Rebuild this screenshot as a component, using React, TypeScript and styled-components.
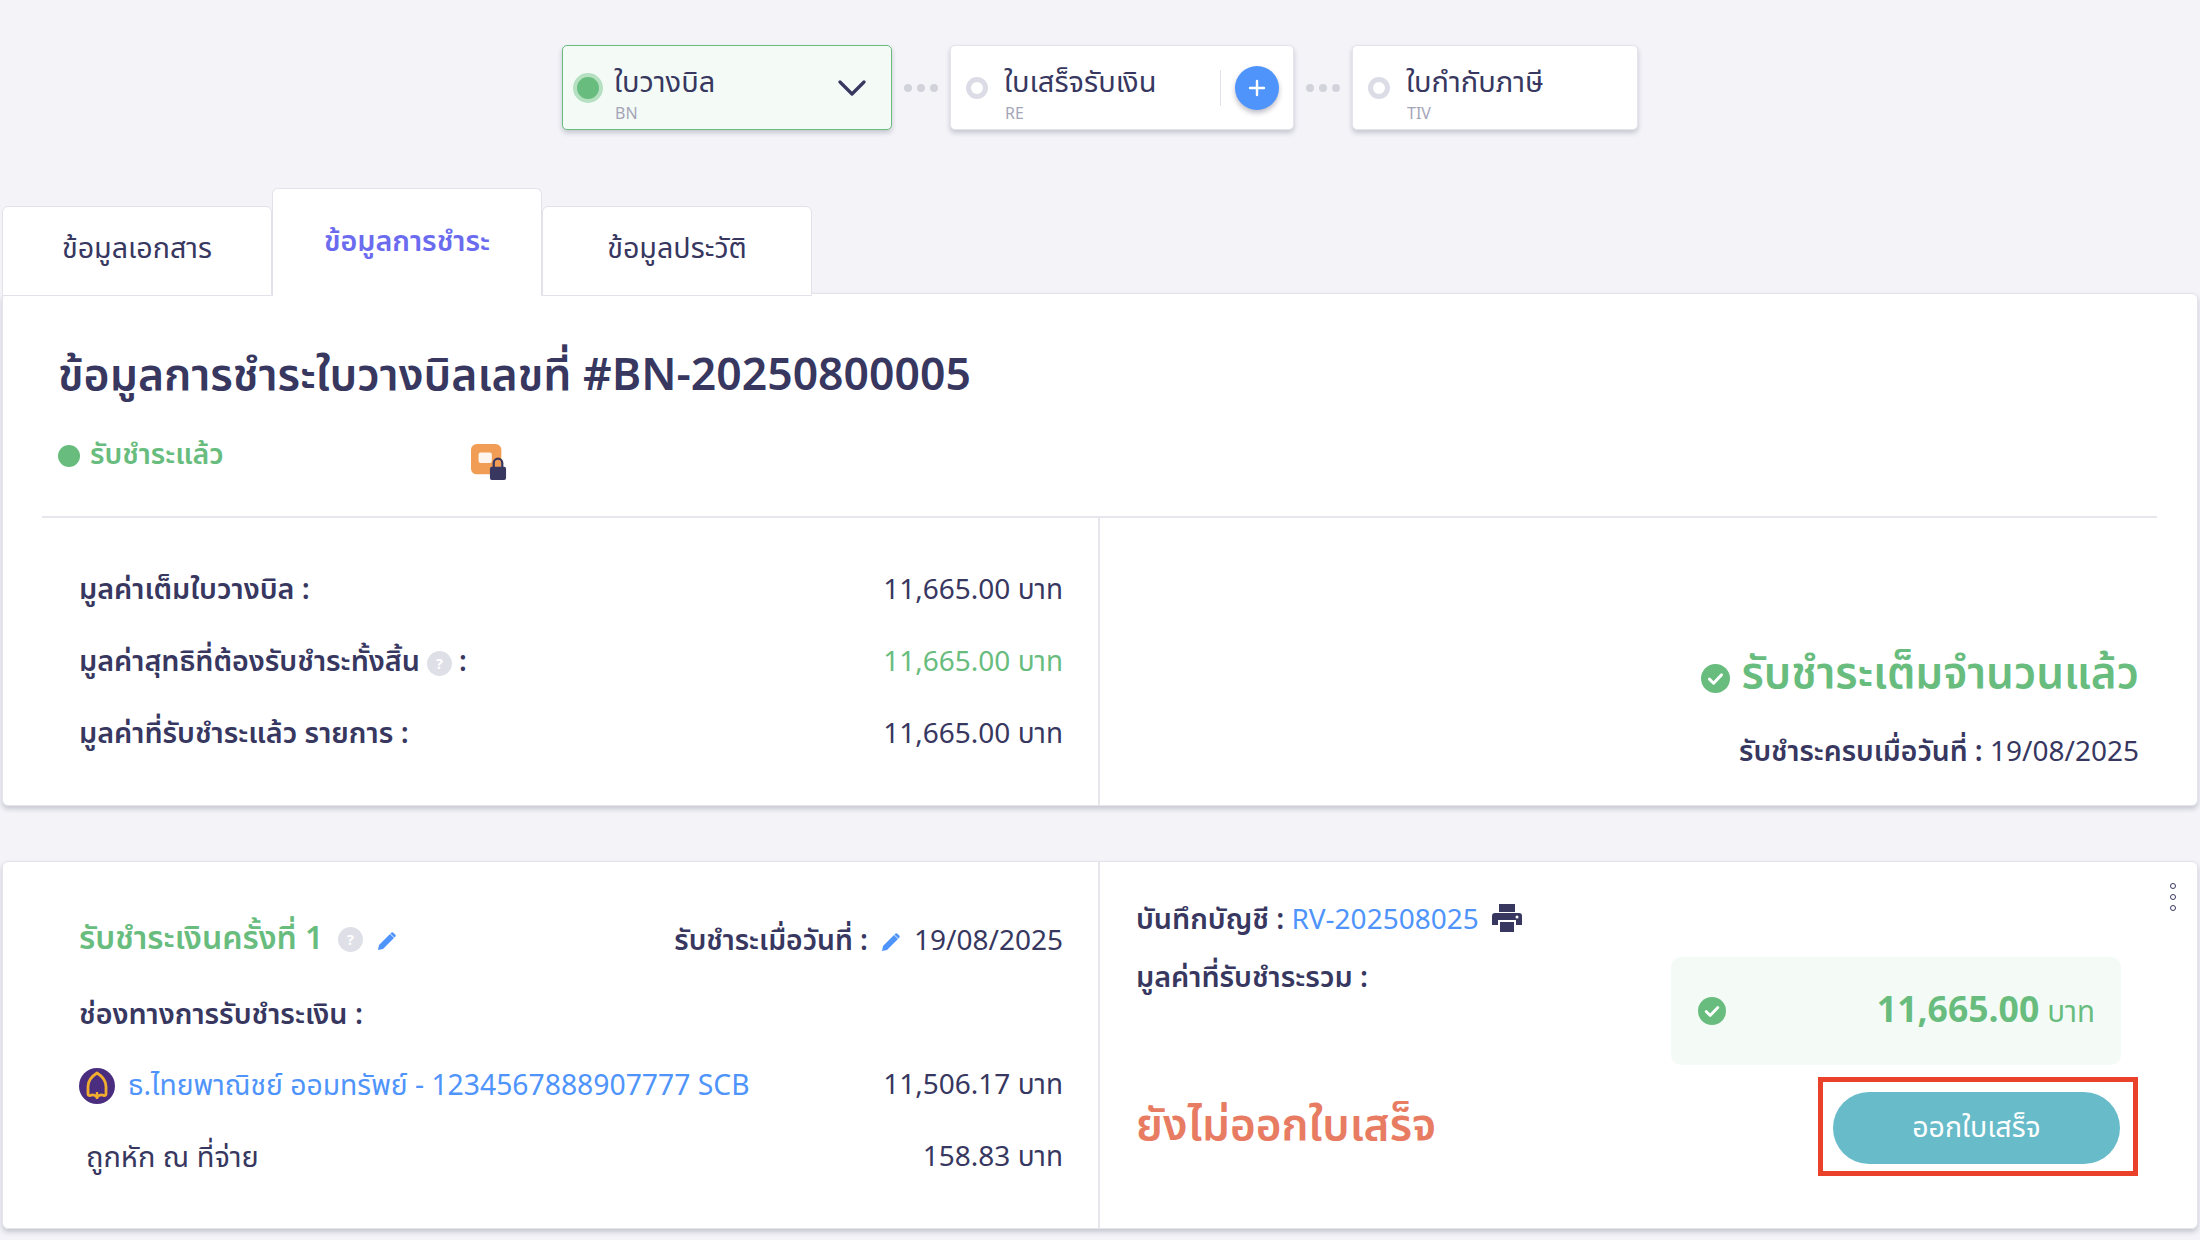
import React from "react";
import styled, { createGlobalStyle } from "styled-components";

const navy = "#37375f";
const green = "#68bd7e";
const blue = "#4f94fb";

const GlobalStyle = createGlobalStyle`
    html, body {
        margin: 0;
        padding: 0;
        background: #f3f3f8;
        color: ${navy};
        font-family: "Noto Sans Thai", "Noto Sans", "Open Sans", sans-serif;
    }
    * {
        box-sizing: border-box;
    }
`;

const Page = styled.div`
    width: 2200px;
    height: 1240px;
    overflow: hidden;
    padding: 45px 2px 0;
`;

const Stepper = styled.div`
    display: flex;
    justify-content: flex-start;
    align-items: center;
    padding-left: 560px;
    height: 85px;
`;

const StepCard = styled.div<{ $active?: boolean; $width: number }>`
    width: ${(p) => p.$width}px;
    height: 85px;
    display: flex;
    align-items: center;
    padding: 0 15px;
    border-radius: 5px;
    background: ${(p) => (p.$active ? "#f4fbf7" : "#fff")};
    border: 1px solid ${(p) => (p.$active ? green : "#e4e4ea")};
    box-shadow: 0 3px 5px rgba(40, 40, 70, 0.22);
`;

const StepDot = styled.span`
    flex: none;
    width: 30px;
    height: 30px;
    margin-left: -5px;
    margin-right: 11px;
    border-radius: 50%;
    background: ${green};
    border: 4px solid #b5e0c1;
`;

const StepRing = styled.span`
    flex: none;
    width: 22px;
    height: 22px;
    margin-right: 16px;
    border-radius: 50%;
    border: 5px solid #dcdce6;
`;

const StepText = styled.div`
    flex: 1;
    display: flex;
    flex-direction: column;
`;

const StepTitle = styled.span`
    font-size: 29px;
    line-height: 38px;
    margin-top: 13px;
`;

const StepCode = styled.span`
    font-size: 16px;
    line-height: 20px;
    color: #a5a5b8;
    margin: 2px 0 0 1px;
`;

const StepDivider = styled.span`
    width: 1px;
    height: 36px;
    background: #e2e2e8;
    margin-right: 14px;
`;

const AddButton = styled.span`
    flex: none;
    width: 44px;
    height: 44px;
    margin-right: -1px;
    border-radius: 50%;
    background: ${blue};
    box-shadow: 0 3px 5px rgba(40, 40, 70, 0.3);
    display: flex;
    align-items: center;
    justify-content: center;
`;

const Chevron = styled.svg`
    flex: none;
    margin-right: 10px;
`;

const Connector = styled.div`
    width: 58px;
    display: flex;
    justify-content: center;
    gap: 5px;
`;

const ConnectorDot = styled.span`
    width: 8px;
    height: 8px;
    border-radius: 50%;
    background: #d2d2da;
`;

const Tabs = styled.div`
    display: flex;
    align-items: flex-end;
    height: 108px;
    margin-top: 58px;
    position: relative;
    z-index: 1;
`;

const Tab = styled.div<{ $active?: boolean }>`
    width: 270px;
    height: ${(p) => (p.$active ? 108 : 90)}px;
    display: flex;
    justify-content: center;
    padding-top: ${(p) => (p.$active ? 34 : 23)}px;
    background: #fff;
    border: 1px solid #e2e2ea;
    border-bottom: ${(p) => (p.$active ? "none" : "1px solid #e2e2ea")};
    border-radius: 6px 6px 0 0;
    font-size: 28.7px;
    line-height: 40px;
    font-weight: ${(p) => (p.$active ? 600 : 400)};
    color: ${(p) => (p.$active ? "#6b6bf0" : navy)};
`;

const Card = styled.section`
    background: #fff;
    border-radius: 6px;
    border: 1px solid #e4e4ea;
    box-shadow: 0 3px 5px rgba(40, 40, 70, 0.22);
`;

const SummaryCard = styled(Card)`
    margin-top: -3px;
    height: 513px;
`;

const SummaryHead = styled.div`
    height: 224px;
    margin: 0 40px 0 39px;
    padding: 54px 16px 0;
    border-bottom: 2px solid #e6e6ec;
`;

const Title = styled.h1`
    margin: 0;
    font-size: 44.5px;
    line-height: 58px;
    font-weight: 600;
    color: ${navy};
`;

const StatusRow = styled.div`
    display: flex;
    align-items: center;
    margin-top: 26px;
`;

const StatusDot = styled.span`
    width: 22px;
    height: 22px;
    border-radius: 50%;
    background: ${green};
    margin-right: 10px;
`;

const StatusText = styled.span`
    width: 381px;
    font-size: 28.5px;
    line-height: 40px;
    font-weight: 600;
    color: ${green};
`;

const WalletSlot = styled.span`
    display: flex;
    margin-top: 12px;
`;

const Split = styled.div<{ $height: number }>`
    display: grid;
    grid-template-columns: 1095px 1fr;
    height: ${(p) => p.$height}px;
`;

const LeftPane = styled.div`
    padding: 0 35px 0 76px;
    display: flex;
    flex-direction: column;
`;

const SummaryRows = styled(LeftPane)`
    padding-top: 53px;
    gap: 32px;
`;

const Row = styled.div`
    display: flex;
    align-items: center;
    justify-content: space-between;
    height: 40px;
`;

const RightPane = styled.div`
    position: relative;
    border-left: 2px solid #e6e6ec;
`;

const PaidPane = styled(RightPane)`
    display: flex;
    flex-direction: column;
    align-items: flex-end;
    padding: 127px 58px 0 0;
`;

const Label = styled.span`
    font-size: 28.7px;
    line-height: 40px;
    font-weight: 600;
    display: inline-flex;
    align-items: center;
`;

const DateLabel = styled(Label)`
    font-size: 28.3px;
`;

const Plain = styled.span<{ $color?: string }>`
    font-size: 28px;
    line-height: 40px;
    color: ${(p) => p.$color || navy};
`;

const PaidTitle = styled.div`
    display: flex;
    align-items: center;
    gap: 11px;
    font-size: 44px;
    line-height: 60px;
    font-weight: 600;
    color: ${green};
`;

const PaidIcon = styled.span`
    display: flex;
    margin-top: 6px;
`;

const PaidDate = styled.div`
    margin-top: 28px;
    font-size: 28px;
    line-height: 40px;
`;

const ReceiptCard = styled(Card)`
    margin-top: 55px;
    height: 368px;
`;

const ReceiptLeft = styled(LeftPane)`
    padding-top: 57px;
`;

const RoundTitle = styled.span`
    font-size: 32px;
    line-height: 40px;
    font-weight: 600;
    color: ${green};
`;

const RoundGroup = styled.div`
    display: flex;
    align-items: center;
`;

const RoundDate = styled(RoundGroup)`
    font-size: 28px;
    padding-top: 5px;
`;

const PencilSlot = styled.span`
    display: flex;
    margin-top: 4px;
`;

const ChannelLabel = styled(Label)`
    margin-top: 37px;
`;

const BankRow = styled(Row)`
    margin-top: 30px;
`;

const BankName = styled.span`
    display: flex;
    align-items: center;
    gap: 13px;
    font-size: 28.3px;
    color: ${blue};
`;

const WithheldRow = styled(Row)`
    margin-top: 32px;
    padding-left: 7px;
`;

const WithheldName = styled(Plain)`
    font-size: 29px;
`;

const ReceiptRight = styled(RightPane)`
    padding: 39px 59px 0 36px;
`;

const Kebab = styled.div`
    position: absolute;
    top: 21px;
    right: 21px;
    display: flex;
    flex-direction: column;
    gap: 5px;
`;

const KebabDot = styled.span`
    width: 6px;
    height: 6px;
    border-radius: 50%;
    border: 1.5px solid ${navy};
`;

const LedgerRow = styled.div`
    display: flex;
    align-items: center;
    height: 40px;
    gap: 7px;
`;

const PrinterSlot = styled.span`
    display: flex;
    margin: -6px 0 0 6px;
`;

const TotalRow = styled.div`
    display: flex;
    justify-content: space-between;
    align-items: flex-start;
    margin-top: 16px;
    padding-right: 17px;
`;

const TotalLabel = styled(Label)`
    margin-top: 2px;
`;

const TotalBox = styled.div`
    width: 450px;
    height: 108px;
    border-radius: 10px;
    background: #f4fbf7;
    display: flex;
    align-items: center;
    justify-content: space-between;
    padding: 0 26px 0 27px;
`;

const TotalAmount = styled.span`
    font-size: 35.5px;
    font-weight: 700;
    color: ${green};
`;

const TotalUnit = styled.span`
    font-size: 29.5px;
    color: ${green};
    margin-left: 8px;
`;

const ActionRow = styled.div`
    display: flex;
    justify-content: space-between;
    align-items: center;
    margin-top: 12px;
`;

const NotIssued = styled.span`
    font-size: 44px;
    line-height: 60px;
    font-weight: 600;
    color: #e87c63;
`;

const ActionFrame = styled.div`
    width: 320px;
    height: 99px;
    border: 5px solid #e9412a;
    padding: 10px 13px 7px 10px;
`;

const IssueButton = styled.button`
    width: 100%;
    height: 100%;
    border: 0;
    border-radius: 36px;
    background: #68bbc9;
    color: #fff;
    font: inherit;
    font-size: 28.5px;
    cursor: pointer;
`;

const Icon = styled.svg<{ $gap?: number }>`
    flex: none;
    margin: 0 ${(p) => p.$gap ?? 0}px;
`;

const CheckCircle = ({ size }: { size: number }) => (
    <Icon width={size} height={size} viewBox="0 0 24 24">
        <circle cx="12" cy="12" r="12" fill={green} />
        <path d="M7 12.5l3.4 3.4L17 9" fill="none" stroke="#fff" strokeWidth="2.4" strokeLinecap="round" strokeLinejoin="round" />
    </Icon>
);

const Help = ({ size, gap }: { size: number; gap: number }) => (
    <Icon $gap={gap} width={size} height={size} viewBox="0 0 24 24">
        <circle cx="12" cy="12" r="12" fill="#dfdfe8" />
        <text x="12" y="17" textAnchor="middle" fontSize="14" fontWeight="700" fill="#fff">?</text>
    </Icon>
);

const Pencil = ({ gap }: { gap: number }) => (
    <Icon $gap={gap} width={18} height={18} viewBox="0 0 18 18">
        <path d="M0 18l1-5L12 2l4 4L5 17z" fill={blue} />
        <path d="M13.2 0.8a1.6 1.6 0 0 1 2.2 0l1.8 1.8a1.6 1.6 0 0 1 0 2.2l-.8.8-4-4z" fill={blue} />
    </Icon>
);

const Printer = () => (
    <Icon width={30} height={28} viewBox="0 0 30 28">
        <path d="M7 0h16v8H7z" fill={navy} />
        <path d="M3 9h24a3 3 0 0 1 3 3v9h-6v-5H6v5H0v-9a3 3 0 0 1 3-3z" fill={navy} />
        <path d="M8 18h14v10H8z" fill={navy} />
        <circle cx="25" cy="13" r="1.5" fill="#fff" />
    </Icon>
);

const WalletLock = () => (
    <Icon width={36} height={36} viewBox="0 0 38 38">
        <rect x="0" y="0" width="32" height="32" rx="6" fill="#f29d55" />
        <rect x="8" y="9" width="14" height="11" rx="2" fill="#fff" opacity="0.9" />
        <path d="M24 25v-5a4.500 4.500 0 0 1 9 0v5" fill="none" stroke={navy} strokeWidth="2.4" />
        <rect x="20" y="24" width="17" height="14" rx="2" fill={navy} />
    </Icon>
);

const ScbLogo = () => (
    <Icon width={36} height={36} viewBox="0 0 36 36">
        <circle cx="18" cy="18" r="18" fill="#4a2d7f" />
        <path d="M18 5c4 2.500 9 7.500 9 13.500V26c0 1.200-1 1.800-2.200 1.400-2.600-1-5-.6-6.800 1.600-1.800-2.200-4.200-2.600-6.800-1.600C10 27.800 9 27.200 9 26v-7.500C9 12.500 14 7.500 18 5z" fill="none" stroke="#f0ad2e" strokeWidth="2.800" strokeLinejoin="round" />
        <path d="M18 24v7" stroke="#f0ad2e" strokeWidth="2.400" />
    </Icon>
);

const Dots = () => (
    <Connector>
        <ConnectorDot />
        <ConnectorDot />
        <ConnectorDot />
    </Connector>
);

export default function App() {
    return (
        <Page>
            <GlobalStyle />
            <Stepper>
                <StepCard $active $width={330}>
                    <StepDot />
                    <StepText>
                        <StepTitle>ใบวางบิล</StepTitle>
                        <StepCode>BN</StepCode>
                    </StepText>
                    <Chevron width={28} height={16} viewBox="0 0 28 16">
                        <path d="M2 2l12 12L26 2" fill="none" stroke={navy} strokeWidth="3.200" strokeLinecap="round" strokeLinejoin="round" />
                    </Chevron>
                </StepCard>
                <Dots />
                <StepCard $width={344}>
                    <StepRing />
                    <StepText>
                        <StepTitle>ใบเสร็จรับเงิน</StepTitle>
                        <StepCode>RE</StepCode>
                    </StepText>
                    <StepDivider />
                    <AddButton>
                        <svg width="18" height="18" viewBox="0 0 18 18">
                            <path d="M9 2v14M2 9h14" stroke="#fff" strokeWidth="2.400" strokeLinecap="round" />
                        </svg>
                    </AddButton>
                </StepCard>
                <Dots />
                <StepCard $width={286}>
                    <StepRing />
                    <StepText>
                        <StepTitle>ใบกำกับภาษี</StepTitle>
                        <StepCode>TIV</StepCode>
                    </StepText>
                </StepCard>
            </Stepper>

            <Tabs>
                <Tab>ข้อมูลเอกสาร</Tab>
                <Tab $active>ข้อมูลการชำระ</Tab>
                <Tab>ข้อมูลประวัติ</Tab>
            </Tabs>

            <SummaryCard>
                <SummaryHead>
                    <Title>ข้อมูลการชำระใบวางบิลเลขที่ #BN-20250800005</Title>
                    <StatusRow>
                        <StatusDot />
                        <StatusText>รับชำระแล้ว</StatusText>
                        <WalletSlot>
                            <WalletLock />
                        </WalletSlot>
                    </StatusRow>
                </SummaryHead>
                <Split $height={287}>
                    <SummaryRows>
                        <Row>
                            <Label>มูลค่าเต็มใบวางบิล :</Label>
                            <Plain>11,665.00 บาท</Plain>
                        </Row>
                        <Row>
                            <Label>
                                มูลค่าสุทธิที่ต้องรับชำระทั้งสิ้น
                                <Help size={25} gap={7} />
                                <Plain>:</Plain>
                            </Label>
                            <Plain $color={green}>11,665.00 บาท</Plain>
                        </Row>
                        <Row>
                            <Label>มูลค่าที่รับชำระแล้ว รายการ :</Label>
                            <Plain>11,665.00 บาท</Plain>
                        </Row>
                    </SummaryRows>
                    <PaidPane>
                        <PaidTitle>
                            <PaidIcon>
                                <CheckCircle size={29} />
                            </PaidIcon>
                            รับชำระเต็มจำนวนแล้ว
                        </PaidTitle>
                        <PaidDate>
                            <DateLabel>รับชำระครบเมื่อวันที่ :</DateLabel> 19/08/2025
                        </PaidDate>
                    </PaidPane>
                </Split>
            </SummaryCard>

            <ReceiptCard>
                <Split $height={366}>
                    <ReceiptLeft>
                        <Row>
                            <RoundGroup>
                                <RoundTitle>รับชำระเงินครั้งที่ 1</RoundTitle>
                                <Help size={25} gap={15} />
                                <PencilSlot>
                                    <Pencil gap={0} />
                                </PencilSlot>
                            </RoundGroup>
                            <RoundDate>
                                <DateLabel>รับชำระเมื่อวันที่ :</DateLabel>
                                <Pencil gap={14} />
                                <Plain>19/08/2025</Plain>
                            </RoundDate>
                        </Row>
                        <ChannelLabel>ช่องทางการรับชำระเงิน :</ChannelLabel>
                        <BankRow>
                            <BankName>
                                <ScbLogo />
                                ธ.ไทยพาณิชย์ ออมทรัพย์ - 1234567888907777 SCB
                            </BankName>
                            <Plain>11,506.17 บาท</Plain>
                        </BankRow>
                        <WithheldRow>
                            <WithheldName>ถูกหัก ณ ที่จ่าย</WithheldName>
                            <Plain>158.83 บาท</Plain>
                        </WithheldRow>
                    </ReceiptLeft>
                    <ReceiptRight>
                        <Kebab>
                            <KebabDot />
                            <KebabDot />
                            <KebabDot />
                        </Kebab>
                        <LedgerRow>
                            <Label>บันทึกบัญชี :</Label>
                            <Plain $color={blue}>RV-202508025</Plain>
                            <PrinterSlot>
                                <Printer />
                            </PrinterSlot>
                        </LedgerRow>
                        <TotalRow>
                            <TotalLabel>มูลค่าที่รับชำระรวม :</TotalLabel>
                            <TotalBox>
                                <CheckCircle size={28} />
                                <span>
                                    <TotalAmount>11,665.00</TotalAmount>
                                    <TotalUnit>บาท</TotalUnit>
                                </span>
                            </TotalBox>
                        </TotalRow>
                        <ActionRow>
                            <NotIssued>ยังไม่ออกใบเสร็จ</NotIssued>
                            <ActionFrame>
                                <IssueButton>ออกใบเสร็จ</IssueButton>
                            </ActionFrame>
                        </ActionRow>
                    </ReceiptRight>
                </Split>
            </ReceiptCard>
        </Page>
    );
}
